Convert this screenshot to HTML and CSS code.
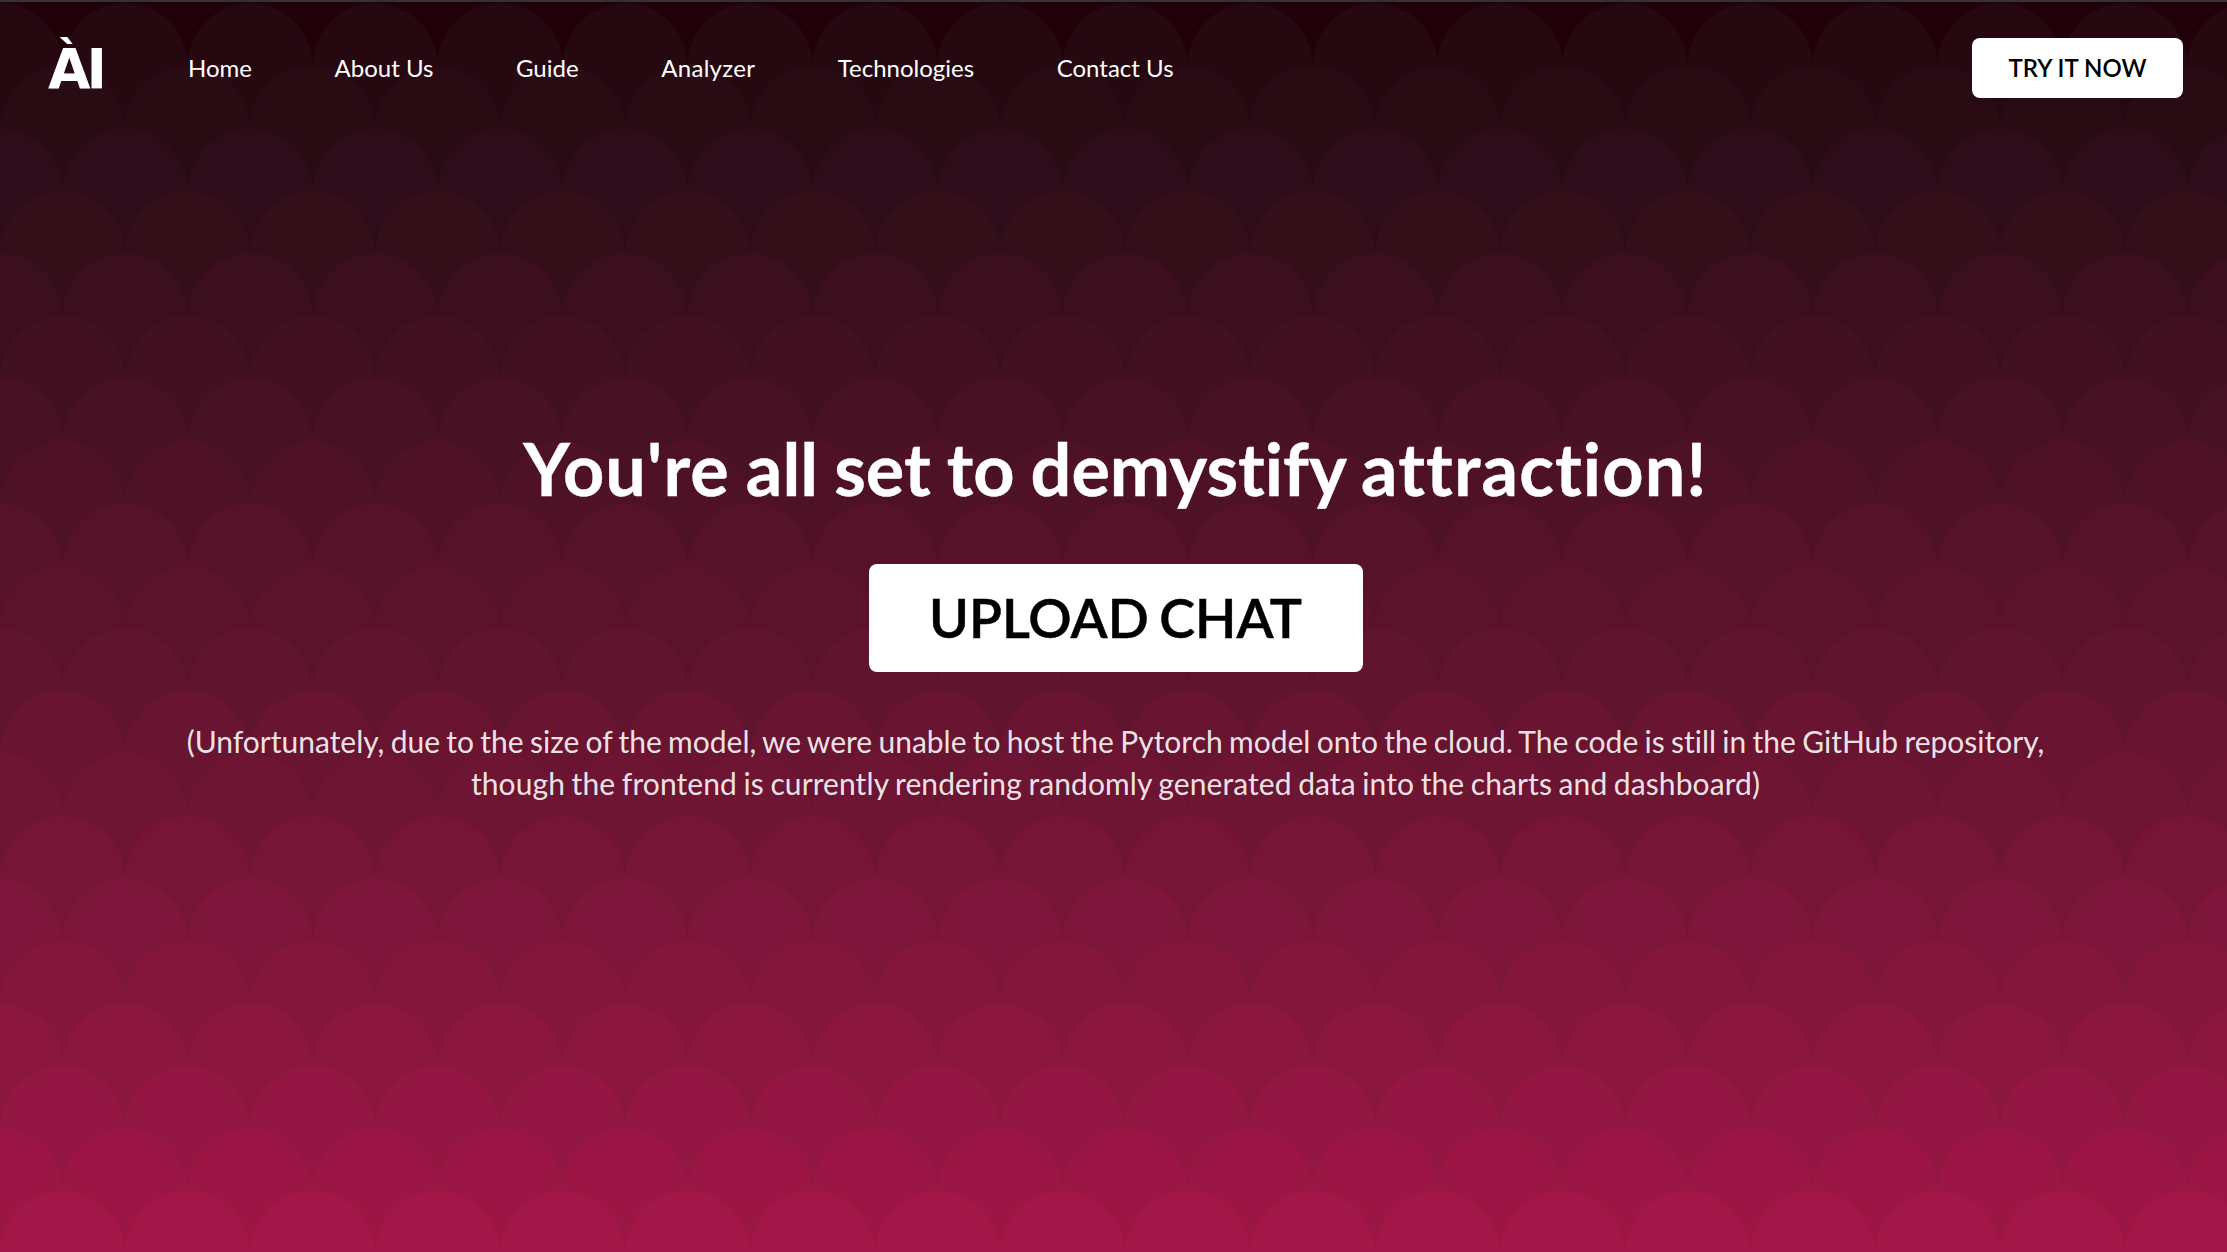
FILE: index.html
```html
<!DOCTYPE html>
<html lang="en">
<head>
    <meta charset="UTF-8">
    <title>Upload Chat</title>
    <link rel="stylesheet" href="styles.css">
</head>
<body>
    <!-- scallop background, one path per row -->
    <svg class="scales" width="2227" height="1252" aria-hidden="true">
        <defs>
            <path id="row" d="M0 62.5a62.5 62.5 0 0 1 125 0a62.5 62.5 0 0 1 125 0a62.5 62.5 0 0 1 125 0a62.5 62.5 0 0 1 125 0a62.5 62.5 0 0 1 125 0a62.5 62.5 0 0 1 125 0a62.5 62.5 0 0 1 125 0a62.5 62.5 0 0 1 125 0a62.5 62.5 0 0 1 125 0a62.5 62.5 0 0 1 125 0a62.5 62.5 0 0 1 125 0a62.5 62.5 0 0 1 125 0a62.5 62.5 0 0 1 125 0a62.5 62.5 0 0 1 125 0a62.5 62.5 0 0 1 125 0a62.5 62.5 0 0 1 125 0a62.5 62.5 0 0 1 125 0a62.5 62.5 0 0 1 125 0a62.5 62.5 0 0 1 125 0v63H0z"/>
        </defs>
        <use href="#row" x="-62.5" y="3.25" fill="#260811"/>
        <use href="#row" x="0" y="65.75" fill="#290b14"/>
        <use href="#row" x="-62.5" y="128.25" fill="#2e0c19"/>
        <use href="#row" x="0" y="190.75" fill="#340e19"/>
        <use href="#row" x="-62.5" y="253.25" fill="#3b0f1e"/>
        <use href="#row" x="0" y="315.75" fill="#411021"/>
        <use href="#row" x="-62.5" y="378.25" fill="#481124"/>
        <use href="#row" x="0" y="440.75" fill="#4e1125"/>
        <use href="#row" x="-62.5" y="503.25" fill="#551229"/>
        <use href="#row" x="0" y="565.75" fill="#5b132b"/>
        <use href="#row" x="-62.5" y="628.25" fill="#61142e"/>
        <use href="#row" x="0" y="690.75" fill="#691431"/>
        <use href="#row" x="-62.5" y="753.25" fill="#6f1534"/>
        <use href="#row" x="0" y="815.75" fill="#761535"/>
        <use href="#row" x="-62.5" y="878.25" fill="#7e153a"/>
        <use href="#row" x="0" y="940.75" fill="#85163b"/>
        <use href="#row" x="-62.5" y="1003.25" fill="#8b163e"/>
        <use href="#row" x="0" y="1065.75" fill="#931643"/>
        <use href="#row" x="-62.5" y="1128.25" fill="#9b1644"/>
        <use href="#row" x="0" y="1190.75" fill="#a21648"/>
    </svg>

    <header class="navbar">
        <a class="logo" href="#">ÀI</a>
        <nav class="nav-links">
            <a href="#">Home</a>
            <a href="#">About Us</a>
            <a href="#">Guide</a>
            <a class="nav-analyzer" href="#">Analyzer</a>
            <a href="#">Technologies</a>
            <a href="#">Contact Us</a>
        </nav>
        <button class="btn" type="button">TRY IT NOW</button>
    </header>

    <main class="upload">
        <h1><span class="wide">You're</span> all set to demystify <span class="wide">attraction!</span></h1>
        <button class="btn btn-large" type="button">UPLOAD CHAT</button>
        <p>
            <span class="note-first">(Unfortunately, due to the size of the model, we were unable to host the Pytorch model onto the cloud. The code is still in the GitHub repository,</span><br>
            <span class="note-second">though the frontend is currently rendering randomly generated data into the charts and dashboard)</span>
        </p>
    </main>
</body>
</html>
```
FILE: styles.css
```css
* {
    box-sizing: border-box;
}

body {
    margin: 0;
    height: 1252px;
    overflow: hidden;
    border-top: 2px solid #333;
    background-color: #220009;
    font-family: Lato, sans-serif;
    font-variant-ligatures: none;
    color: #fff;
}

.scales {
    position: absolute;
    top: 0;
    left: 0;
    z-index: -1;
}

.navbar {
    display: flex;
    align-items: center;
    height: 132px;
    padding: 0 44px 0 48px;
}

.logo {
    width: 140px;
    padding-top: 2px;
    font-family: "DejaVu Sans", sans-serif;
    font-size: 55px;
    font-weight: 700;
    letter-spacing: -4px;
    color: #fff;
    text-decoration: none;
}

.nav-links {
    display: flex;
    gap: 82.6px;
    flex: 1;
    padding-bottom: 2px;
}

.nav-links a {
    font-size: 24px;
    color: #fff;
    text-decoration: none;
    white-space: nowrap;
}

.nav-links .nav-analyzer {
    letter-spacing: 0.3px;
}

.btn {
    width: 211px;
    height: 60px;
    padding: 0 0 2px;
    border: none;
    border-radius: 8px;
    background-color: #fff;
    color: #000;
    font-family: Lato, sans-serif;
    font-size: 24px;
    font-weight: 600;
}

.upload {
    display: flex;
    flex-direction: column;
    align-items: center;
    padding-top: 292px;
    padding-left: 4px;
    text-align: center;
}

.upload h1 {
    margin: 0 0 54px;
    font-size: 72px;
    font-weight: 700;
    line-height: 84px;
    word-spacing: -1.5px;
    -webkit-text-stroke: 0.4px #fff;
}

.upload .wide {
    letter-spacing: 1.1px;
}

.btn-large {
    width: 494px;
    height: 108px;
    font-size: 54px;
    word-spacing: -3px;
    -webkit-text-stroke: 0.5px #000;
}

.upload p {
    margin: 48px 0 0;
    font-size: 30px;
    line-height: 42px;
    color: rgba(255, 255, 255, 0.9);
    white-space: nowrap;
}

.note-first {
    word-spacing: -1.4px;
}

.note-second {
    letter-spacing: 0.09px;
    word-spacing: -1.2px;
}
```
